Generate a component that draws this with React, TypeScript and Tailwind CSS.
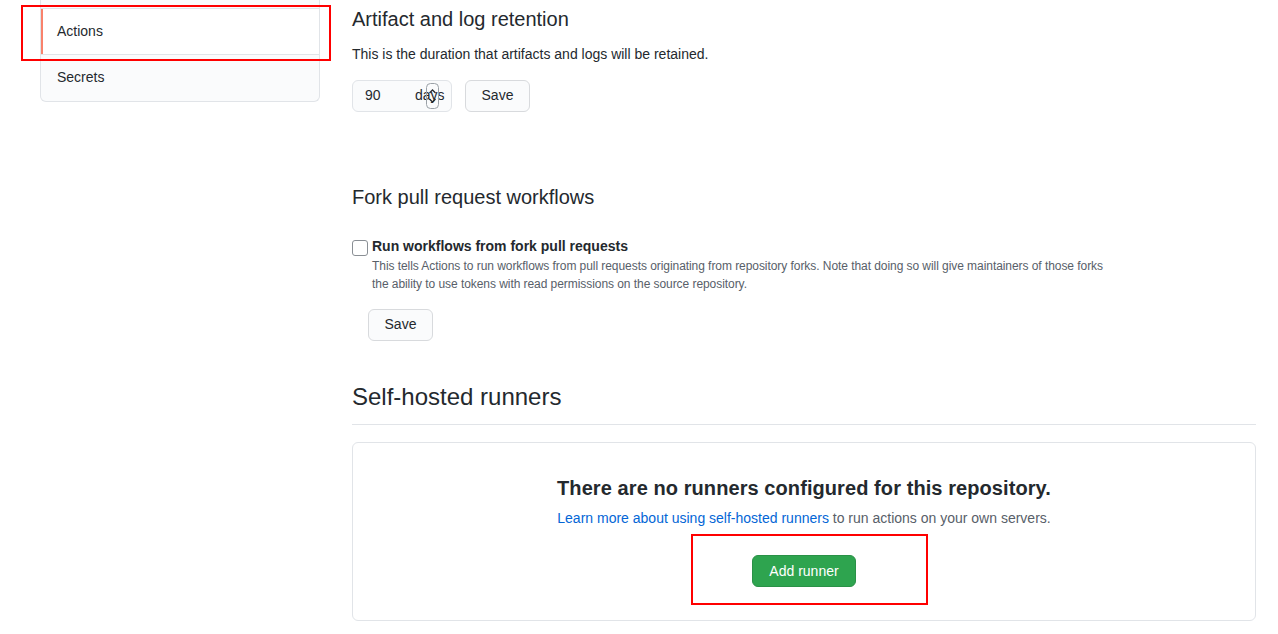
import React from "react";

export default function App() {
  return (
    <div className="relative min-h-[634px] w-[1278px] overflow-hidden bg-white font-['Liberation_Sans',Arial,sans-serif] text-[#24292e]">
      <div className="flex">
        {/* Sidebar */}
        <div className="w-[320px] shrink-0 pl-[40px]">
          <nav className="overflow-hidden rounded-b-md border border-t-0 border-[#e1e4e8] bg-[#fafbfc] text-[14px]">
            <div className="h-[9px] border-b border-[#e1e4e8]" />
            <div className="relative flex h-[46px] items-center border-b border-[#e1e4e8] bg-white px-4">
              <span className="absolute bottom-0 left-0 top-0 w-[2px] bg-[#f9826c]" />
              Actions
            </div>
            <div className="flex h-[46px] items-center px-4 pb-[2px]">Secrets</div>
          </nav>
        </div>

        {/* Main */}
        <div className="ml-[32px] w-[904px] shrink-0">
          <h2 className="mt-[4px] text-[20px] font-normal leading-[30px]">Artifact and log retention</h2>
          <p className="mt-[10px] text-[14px] leading-[21px]">This is the duration that artifacts and logs will be retained.</p>
          <div className="mt-[15px] flex items-center gap-[13px]">
            <div className="relative h-[32px] w-[100px] rounded-md border border-[#e1e4e8] bg-[#fafbfc] text-[14px]">
              <span className="absolute left-[12px] top-[4px] leading-[20px]">90</span>
              <span className="absolute left-[62px] top-[4px] leading-[20px]">days</span>
              <svg className="absolute left-[73px] top-[2px]" width="13" height="26" viewBox="0 0 13 26">
                <rect x="0.5" y="0.5" width="12" height="25" rx="4" fill="none" stroke="#9aa0a6" strokeWidth="1" />
                <path d="M3.5 10 L6.5 7 L9.5 10" fill="none" stroke="#24292e" strokeWidth="1.3" />
                <path d="M3.5 16 L6.5 19 L9.5 16" fill="none" stroke="#24292e" strokeWidth="1.3" />
              </svg>
            </div>
            <button className="h-[32px] w-[65px] rounded-md border border-[#d8dadd] bg-[#fafbfc] pb-[2px] text-[14px] leading-[20px] text-[#24292e]">
              Save
            </button>
          </div>

          <h2 className="mt-[70px] text-[20px] font-normal leading-[30px]">Fork pull request workflows</h2>
          <div className="mt-[24px] flex">
            <div className="mt-[4px] h-[16px] w-[16px] shrink-0 rounded-[3px] border border-[#8a8f95] bg-white" />
            <div className="ml-[4px]">
              <div className="text-[14px] font-bold leading-[21px]">Run workflows from fork pull requests</div>
              <div className="text-[12px] leading-[18px] tracking-[-0.06px] text-[#586069]">
                This tells Actions to run workflows from pull requests originating from repository forks. Note that doing so will give maintainers of those forks
                <br />
                the ability to use tokens with read permissions on the source repository.
              </div>
            </div>
          </div>
          <button className="ml-[16px] mt-[16px] h-[32px] w-[65px] rounded-md border border-[#d8dadd] bg-[#fafbfc] pb-[2px] text-[14px] leading-[20px] text-[#24292e]">
            Save
          </button>

          <div className="mt-[38px] border-b border-[#e1e4e8] pb-[9px]">
            <h2 className="text-[24px] font-normal leading-[36px]">Self-hosted runners</h2>
          </div>
          <div className="mt-[17px] flex h-[179px] flex-col items-center rounded-md border border-[#e1e4e8] pt-[30px]">
            <h3 className="text-[20px] font-bold leading-[30px] tracking-[0.08px]">There are no runners configured for this repository.</h3>
            <p className="mt-[5px] text-[14px] leading-[21px] text-[#586069]">
              <a className="text-[#0366d6]">Learn more about using self-hosted runners</a> to run actions on your own servers.
            </p>
            <button className="mt-[26px] h-[32px] w-[104px] rounded-md border border-[#2a9147] bg-[#2ea44f] text-[14px] leading-[20px] text-white">
              Add runner
            </button>
          </div>
        </div>
      </div>

      {/* Red highlight overlays */}
      <div className="pointer-events-none absolute left-[21px] top-[5px] h-[56px] w-[310px] border-2 border-[#ff0000]" />
      <div className="pointer-events-none absolute left-[691px] top-[534px] h-[71px] w-[237px] border-2 border-[#ff0000]" />
    </div>
  );
}
